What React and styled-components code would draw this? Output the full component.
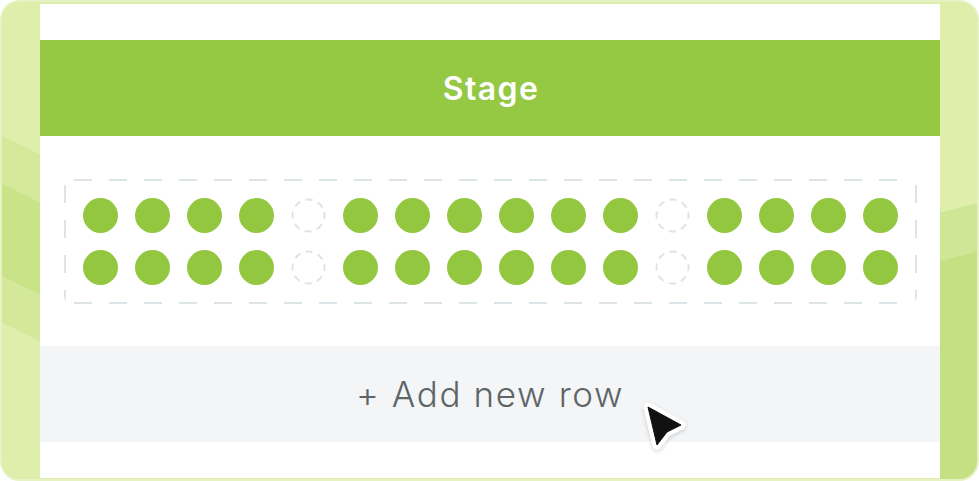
import React from "react";
import styled, { createGlobalStyle } from "styled-components";

const Global = createGlobalStyle`
  html, body { margin: 0; padding: 0; background: #ffffff; }
  body { font-family: "Inter", "Liberation Sans", sans-serif; }
`;

const Frame = styled.div`
  position: relative;
  box-sizing: border-box;
  width: 979px;
  height: 481px;
  border: 2px solid #e7f2c2;
  border-radius: 20px;
  overflow: hidden;
  display: flex;
  background: #dfeeab;
`;

const LeftStrip = styled.div`
  width: 38px;
  flex: none;
  background: linear-gradient(
    206deg,
    #dfeeab 0 137px,
    #d5e99c 137px 180px,
    #c9e389 180px 263px,
    #d3e89a 263px 305px,
    #dfeeab 305px
  );
`;

const RightStrip = styled.div`
  width: 37px;
  flex: none;
  background: linear-gradient(
    165.6deg,
    #dfeeab 0 204px,
    #cfe697 204px 251px,
    #c3e183 251px
  );
`;

const Panel = styled.div`
  position: relative;
  flex: 1;
  margin: 2px 0 1px;
  background: #ffffff;
  padding-top: 36px;
  display: flex;
  flex-direction: column;
  align-items: stretch;
`;

const StageHeader = styled.div`
  height: 96px;
  background: #95c843;
  color: #ffffff;
  display: flex;
  align-items: center;
  justify-content: center;
  font-size: 32px;
  font-weight: 600;
  letter-spacing: 1.4px;
  padding-left: 2px;
`;

const SeatArea = styled.div`
  display: flex;
  justify-content: center;
  padding: 43px 0 42px;
`;

const dash = "#dde4e8";

const SeatBox = styled.div`
  display: grid;
  grid-template-columns: repeat(16, 35px);
  grid-auto-rows: 35px;
  gap: 17px;
  padding: 19px;
  border-radius: 8px;
  background:
    linear-gradient(90deg, ${dash} 18px, transparent 18px) 10px 0 / 35px 2px repeat-x,
    linear-gradient(90deg, ${dash} 18px, transparent 18px) 10px 100% / 35px 2px repeat-x,
    linear-gradient(180deg, ${dash} 18px, transparent 18px) 0 6px / 2px 35px repeat-y,
    linear-gradient(180deg, ${dash} 18px, transparent 18px) 100% 6px / 2px 35px repeat-y;
`;

const Seat = styled.div`
  width: 35px;
  height: 35px;
  border-radius: 50%;
  background: #93c740;
`;

const EmptySeat = styled.svg`
  width: 35px;
  height: 35px;
  display: block;
`;

const AddRow = styled.div`
  height: 96px;
  background: #f3f5f6;
  color: #5f6567;
  display: flex;
  align-items: center;
  justify-content: center;
  font-size: 35px;
  font-weight: 300;
  letter-spacing: 1.6px;
`;

const Cursor = styled.svg`
  position: absolute;
  left: 596px;
  top: 391px;
  width: 56px;
  height: 60px;
  overflow: visible;
`;

const layout = ["s", "s", "s", "s", "e", "s", "s", "s", "s", "s", "s", "e", "s", "s", "s", "s"];

function Empty() {
  return (
    <EmptySeat viewBox="0 0 36 36">
      <circle
        cx="18"
        cy="18"
        r="16.5"
        fill="none"
        stroke="#dfe3e6"
        strokeWidth="2"
        strokeDasharray="7.2 5.75"
        transform="rotate(-12 18 18)"
      />
    </EmptySeat>
  );
}

export default function App() {
  const seats = [0, 1].flatMap((r) =>
    layout.map((t, i) => (t === "s" ? <Seat key={`${r}-${i}`} /> : <Empty key={`${r}-${i}`} />))
  );
  return (
    <>
      <Global />
      <Frame>
        <LeftStrip />
        <Panel>
          <StageHeader>Stage</StageHeader>
          <SeatArea>
            <SeatBox>{seats}</SeatBox>
          </SeatArea>
          <AddRow>+ Add new row</AddRow>
          <Cursor viewBox="0 0 56 60">
            <defs>
              <filter id="sh" x="-40%" y="-40%" width="180%" height="180%">
                <feDropShadow dx="0" dy="1.5" stdDeviation="2" floodColor="#000" floodOpacity="0.18" />
              </filter>
            </defs>
            <path
              d="M12 12 L45 30 L31 37 L21 50 Z"
              fill="#ffffff"
              stroke="#ffffff"
              strokeWidth="9"
              strokeLinejoin="round"
              filter="url(#sh)"
            />
            <path d="M12 12 L45 30 L31 37 L21 50 Z" fill="#111111" strokeLinejoin="round" stroke="#111" strokeWidth="1" />
          </Cursor>
        </Panel>
        <RightStrip />
      </Frame>
    </>
  );
}
